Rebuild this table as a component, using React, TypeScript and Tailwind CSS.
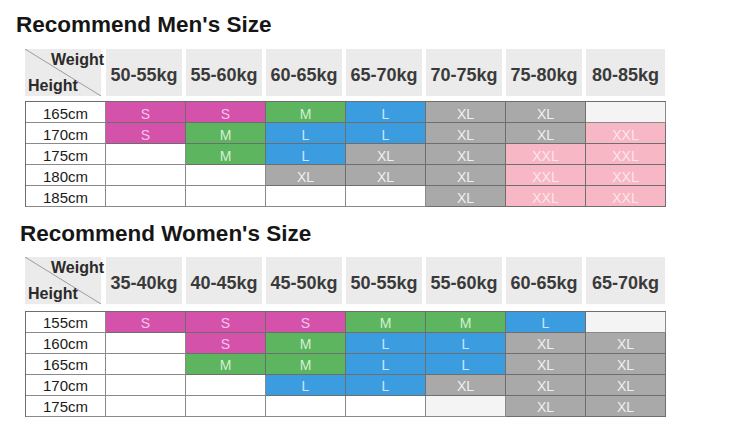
import React from "react";

type Size = "S" | "M" | "L" | "XL" | "XXL" | "" | "-";

const cellStyle: Record<string, string> = {
  S: "bg-[#d452a9] text-[#f6c4ea] border-[#6e6e6e]",
  M: "bg-[#5db55f] text-[#d4f0d2] border-[#6e6e6e]",
  L: "bg-[#3b9de0] text-[#cde8fb] border-[#6e6e6e]",
  XL: "bg-[#a9a9a9] text-[#f0f0f0] border-[#6e6e6e]",
  XXL: "bg-[#f8b7c4] text-[#fde6eb] border-[#6e6e6e]",
  "": "bg-white text-[#1a1a1a] border-[#8a8a8a]",
  "-": "bg-[#f4f4f4] text-[#1a1a1a] border-[#8a8a8a]",
};

type Section = {
  title: string;
  weights: string[];
  rows: { h: string; cells: Size[] }[];
};

const men: Section = {
  title: "Recommend Men's Size",
  weights: ["50-55kg", "55-60kg", "60-65kg", "65-70kg", "70-75kg", "75-80kg", "80-85kg"],
  rows: [
    { h: "165cm", cells: ["S", "S", "M", "L", "XL", "XL", "-"] },
    { h: "170cm", cells: ["S", "M", "L", "L", "XL", "XL", "XXL"] },
    { h: "175cm", cells: ["", "M", "L", "XL", "XL", "XXL", "XXL"] },
    { h: "180cm", cells: ["", "", "XL", "XL", "XL", "XXL", "XXL"] },
    { h: "185cm", cells: ["", "", "", "", "XL", "XXL", "XXL"] },
  ],
};

const women: Section = {
  title: "Recommend Women's Size",
  weights: ["35-40kg", "40-45kg", "45-50kg", "50-55kg", "55-60kg", "60-65kg", "65-70kg"],
  rows: [
    { h: "155cm", cells: ["S", "S", "S", "M", "M", "L", "-"] },
    { h: "160cm", cells: ["", "S", "M", "L", "L", "XL", "XL"] },
    { h: "165cm", cells: ["", "M", "M", "L", "L", "XL", "XL"] },
    { h: "170cm", cells: ["", "", "L", "L", "XL", "XL", "XL"] },
    { h: "175cm", cells: ["", "", "", "", "-", "XL", "XL"] },
  ],
};

function Header({ weights }: { weights: string[] }) {
  return (
    <div className="ml-[25px] grid grid-cols-[repeat(8,80px)] h-[47px]">
      <div className="relative w-[76px] h-[47px] bg-[#ebebeb] flex flex-col justify-between pt-[2px] pb-[1px]">
        <svg className="absolute inset-0" width="76" height="47" viewBox="0 0 76 47">
          <line x1="0" y1="0" x2="76" y2="47" stroke="#9c9c9c" strokeWidth="1" />
        </svg>
        <div className="relative self-end -mr-[3px] text-[16px] leading-[18px] font-bold text-[#2a2a2a]">Weight</div>
        <div className="relative self-start pl-[3px] text-[16px] leading-[18px] font-bold text-[#2a2a2a]">Height</div>
      </div>
      {weights.map((w, i) => (
        <div
          key={w}
          className={`${i === weights.length - 1 ? "w-[79px]" : "w-[76px]"} ml-[1px] h-[47px] bg-[#ebebeb] flex items-center justify-center pt-[5px] text-[18px] leading-[21px] font-bold text-[#3a3a3a] whitespace-nowrap`}
        >
          {w}
        </div>
      ))}
    </div>
  );
}

function Body({ rows, pt }: { rows: Section["rows"]; pt: string }) {
  return (
    <div className="ml-[25px] w-[641px] grid grid-cols-[repeat(8,80px)] border-l border-t border-[#6e6e6e]">
      {rows.map((r) => (
        <React.Fragment key={r.h}>
          <div className={`h-[21px] border-r border-b border-[#8a8a8a] bg-white flex items-center justify-center ${pt} text-[15px] leading-[17px] text-[#1a1a1a]`}>
            {r.h}
          </div>
          {r.cells.map((c, i) => (
            <div
              key={i}
              className={`h-[21px] border-r border-b flex items-center justify-center ${pt} text-[14px] leading-[16px] ${cellStyle[c]}`}
            >
              {c === "-" ? "" : c}
            </div>
          ))}
        </React.Fragment>
      ))}
    </div>
  );
}

export default function App() {
  return (
    <div className="w-[750px] h-[430px] bg-white overflow-hidden pt-[12px] font-['Liberation_Sans',Arial,sans-serif]">
      <div className="pl-[16px] h-[25px] text-[22.5px] leading-[25px] font-bold text-[#161616]">{men.title}</div>
      <div className="mt-[12px]">
        <Header weights={men.weights} />
      </div>
      <div className="mt-[5px]">
        <Body rows={men.rows} pt="pt-[3px]" />
      </div>
      <div className="mt-[14px] pl-[20px] h-[25px] text-[22.5px] leading-[25px] font-bold text-[#161616]">{women.title}</div>
      <div className="mt-[11px]">
        <Header weights={women.weights} />
      </div>
      <div className="mt-[7px]">
        <Body rows={women.rows} pt="pt-[1px]" />
      </div>
    </div>
  );
}
